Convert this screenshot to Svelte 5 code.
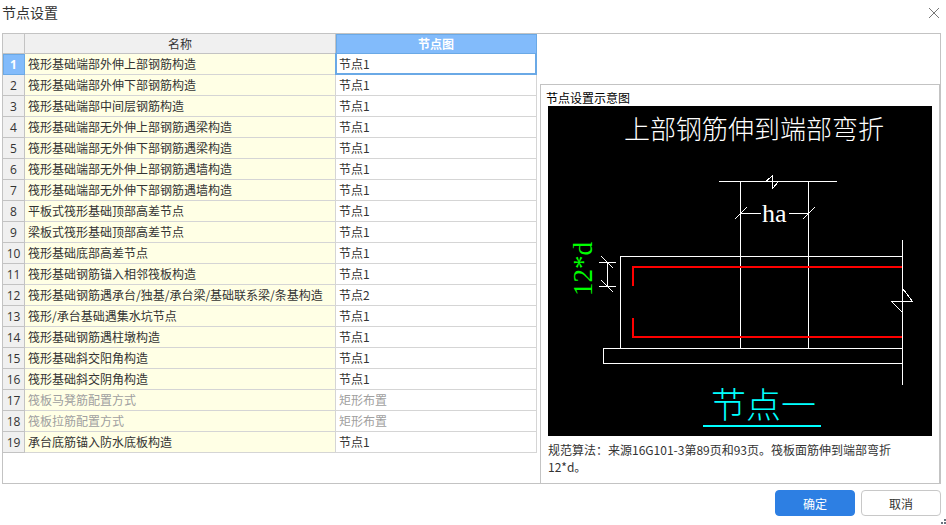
<script lang="ts">
	type NodeRow = { name: string; value: string; disabled?: boolean };

	const rows: NodeRow[] = [
		{ name: '筏形基础端部外伸上部钢筋构造', value: '节点1' },
		{ name: '筏形基础端部外伸下部钢筋构造', value: '节点1' },
		{ name: '筏形基础端部中间层钢筋构造', value: '节点1' },
		{ name: '筏形基础端部无外伸上部钢筋遇梁构造', value: '节点1' },
		{ name: '筏形基础端部无外伸下部钢筋遇梁构造', value: '节点1' },
		{ name: '筏形基础端部无外伸上部钢筋遇墙构造', value: '节点1' },
		{ name: '筏形基础端部无外伸下部钢筋遇墙构造', value: '节点1' },
		{ name: '平板式筏形基础顶部高差节点', value: '节点1' },
		{ name: '梁板式筏形基础顶部高差节点', value: '节点1' },
		{ name: '筏形基础底部高差节点', value: '节点1' },
		{ name: '筏形基础钢筋锚入相邻筏板构造', value: '节点1' },
		{ name: '筏形基础钢筋遇承台/独基/承台梁/基础联系梁/条基构造', value: '节点2' },
		{ name: '筏形/承台基础遇集水坑节点', value: '节点1' },
		{ name: '筏形基础钢筋遇柱墩构造', value: '节点1' },
		{ name: '筏形基础斜交阳角构造', value: '节点1' },
		{ name: '筏形基础斜交阴角构造', value: '节点1' },
		{ name: '筏板马凳筋配置方式', value: '矩形布置', disabled: true },
		{ name: '筏板拉筋配置方式', value: '矩形布置', disabled: true },
		{ name: '承台底筋锚入防水底板构造', value: '节点1' }
	];

	let selected = 0;
</script>

<div class="dialog">
	<header>
		<h1>节点设置</h1>
		<button class="close" type="button" aria-label="关闭">
			<svg viewBox="0 0 12 12" width="12" height="12">
				<path d="M1 1 11 11M11 1 1 11" />
			</svg>
		</button>
	</header>

	<main>
		<div class="list">
			<table>
				<colgroup>
					<col class="col-index" />
					<col class="col-name" />
					<col />
				</colgroup>
				<thead>
					<tr>
						<th></th>
						<th>名称</th>
						<th class="current">节点图</th>
					</tr>
				</thead>
				<tbody>
					{#each rows as row, i}
						<tr class:selected={i === selected} class:disabled={row.disabled}>
							<th scope="row">{i + 1}</th>
							<td class="name">{row.name}</td>
							<td class="value">{row.value}</td>
						</tr>
					{/each}
				</tbody>
			</table>
		</div>

		<section class="preview">
			<h2>节点设置示意图</h2>
			<svg class="diagram" viewBox="0 0 384 330" role="img" aria-label="节点设置示意图">
				<rect width="384" height="330" fill="#000" />
				<text class="caption" x="76" y="33">上部钢筋伸到端部弯折</text>

				<!-- concrete outline -->
				<g class="line">
					<path d="M171 75.5H289M192.5 75V242M260.5 75V242" />
					<path d="M354 150.5H72.5V242M354 242.5H55.5V257.5H354" />
					<path d="M354.5 134V279" />
				</g>
				<!-- break marks -->
				<g class="line">
					<path d="M218 75.5 224.5 69.5V82.5L230 76" />
					<path d="M355 183 364.5 195.5H343.5L354.5 206.5" />
				</g>
				<!-- dimensions -->
				<g class="line">
					<path d="M193 107.5H213M241 107.5H260" />
					<path d="M186.5 113.5 198.5 101.5M254.5 113.5 266.5 101.5" />
					<path d="M51 156.5H68M51 180.5H68M59.5 156V180" />
					<path d="M53.5 150.5 65.5 162.5M53.5 174.5 65.5 186.5" />
				</g>
				<!-- rebar -->
				<path class="rebar" d="M354 161H85V180M85 212V231H354" />

				<text class="dim" x="214" y="116">ha</text>
				<text class="dim bend" transform="translate(44 190) rotate(-90)">12*d</text>
				<text class="node" x="163" y="312">节点一</text>
				<rect x="155" y="319" width="118" height="2" fill="#0ff" />
			</svg>
			<p>规范算法：来源16G101-3第89页和93页。筏板面筋伸到端部弯折12*d。</p>
		</section>
	</main>

	<footer>
		<button class="btn primary" type="button">确定</button>
		<button class="btn" type="button">取消</button>
		<svg class="grip" viewBox="0 0 5 5" width="5" height="5">
			<path d="M3 0h2v2h-2zM0 3h2v2h-2zM3 3h2v2h-2z" />
		</svg>
	</footer>
</div>

<style>
	:global(body) {
		margin: 0;
		background: #fff;
	}

	.dialog {
		--line: #c3c3c3;
		--grid: #d5d5d5;
		--accent: #82bbfb;
		--accent-line: #6aa9e6;

		position: relative;
		font-family: 'Noto Sans CJK SC', sans-serif;
		font-size: 12px;
		line-height: 17px;
		color: #333;
	}

	header {
		display: flex;
		justify-content: space-between;
		align-items: center;
		height: 25px;
		padding: 0 6px 8px 2px;
	}

	h1 {
		margin: 0;
		font-size: 14px;
		font-weight: normal;
	}

	.close {
		display: flex;
		padding: 0;
		border: 0;
		background: none;
	}

	.close path {
		fill: none;
		stroke: #777;
	}

	main {
		display: grid;
		grid-template-columns: minmax(0, 1fr) 400px;
		margin: 0 5px 0 2px;
		border: 1px solid var(--line);
	}

	.list {
		padding: 0 3px 30px 0;
	}

	table {
		width: 100%;
		table-layout: fixed;
		border-collapse: separate;
		border-spacing: 0;
	}

	.col-index {
		width: 22px;
	}

	.col-name {
		width: 311px;
	}

	th,
	td {
		box-sizing: border-box;
		height: 21px;
		padding: 0 3px;
		border-right: 1px solid var(--grid);
		border-bottom: 1px solid var(--grid);
		text-align: left;
		white-space: nowrap;
	}

	td {
		padding-bottom: 2px;
	}

	th {
		padding: 0;
		border-color: var(--line);
		background: #f0f0f0;
		font-weight: normal;
		text-align: center;
	}

	thead th {
		height: 20px;
	}

	tbody th {
		font-family: 'Open Sans', sans-serif;
	}

	.name {
		background: #ffffe5;
	}

	.disabled td {
		color: #a0a0a0;
	}

	.current,
	.selected th {
		border-color: var(--accent-line);
		background: var(--accent);
		color: #fff;
		font-weight: bold;
		box-shadow: inset 1px 1px var(--accent-line);
	}

	.selected .value {
		position: relative;
	}

	.selected .value::after {
		content: '';
		position: absolute;
		inset: -1px;
		border: 2px solid var(--accent-line);
		border-top-width: 1px;
	}

	.preview {
		margin-top: 50px;
		padding: 4px 7px 0;
		border: 1px solid var(--line);
		border-bottom: 0;
	}

	h2 {
		margin: 0 0 0 -2px;
		font-size: 12px;
		font-weight: normal;
		color: #000;
	}

	.diagram {
		display: block;
		width: 100%;
	}

	.line {
		fill: none;
		stroke: #fff;
		shape-rendering: crispEdges;
	}

	.rebar {
		fill: none;
		stroke: #f00;
		stroke-width: 2;
		shape-rendering: crispEdges;
	}

	.caption,
	.node {
		font-family: 'Noto Sans CJK SC', sans-serif;
		font-size: 26px;
		font-weight: 300;
		fill: #fff;
	}

	.node {
		font-size: 35px;
		fill: #0ff;
	}

	.dim {
		font-family: 'Liberation Serif', serif;
		font-size: 26px;
		fill: #fff;
	}

	.bend {
		font-size: 27px;
		fill: #0f0;
	}

	p {
		margin: 5px 0 0;
		padding-right: 16px;
	}

	footer {
		display: flex;
		justify-content: flex-end;
		gap: 6px;
		padding: 6px 5px 9px;
	}

	.btn {
		width: 80px;
		height: 26px;
		padding: 0;
		border: 1px solid #c8c8c8;
		border-radius: 4px;
		background: #fff;
		color: #333;
		font: inherit;
	}

	.primary {
		border-color: #2d7fe3;
		background: #2d7fe3;
		color: #fff;
	}

	.grip {
		position: absolute;
		right: 0;
		bottom: 1px;
		fill: #6b7480;
	}
</style>
